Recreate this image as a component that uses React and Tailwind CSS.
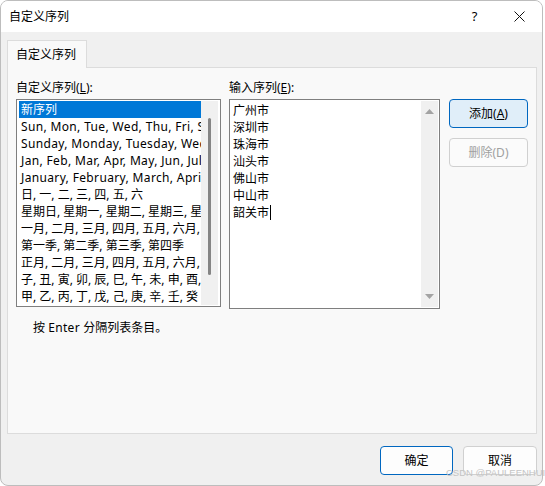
import React from "react";

const FONT = { fontFamily: '"Noto Sans", "Noto Sans CJK SC", sans-serif' };

const listItems = [
  { t: "Sun, Mon, Tue, Wed, Thu, Fri, Sat", latin: true },
  { t: "Sunday, Monday, Tuesday, Wednesday, Thursday, Friday, Saturday", latin: true },
  { t: "Jan, Feb, Mar, Apr, May, Jun, Jul, Aug, Sep, Oct, Nov, Dec", latin: true },
  { t: "January, February, March, April, May, June, July", latin: true },
  { t: "日, 一, 二, 三, 四, 五, 六" },
  { t: "星期日, 星期一, 星期二, 星期三, 星期四, 星期五, 星期六" },
  { t: "一月, 二月, 三月, 四月, 五月, 六月, 七月, 八月" },
  { t: "第一季, 第二季, 第三季, 第四季" },
  { t: "正月, 二月, 三月, 四月, 五月, 六月, 七月, 八月" },
  { t: "子, 丑, 寅, 卯, 辰, 巳, 午, 未, 申, 酉, 戌, 亥" },
  { t: "甲, 乙, 丙, 丁, 戊, 己, 庚, 辛, 壬, 癸" },
];

const cities = ["广州市", "深圳市", "珠海市", "汕头市", "佛山市", "中山市", "韶关市"];

function Button({ children, primary, disabled }) {
  return (
    <div
      className={`h-[29px] flex items-center justify-center rounded-[4px] border text-[12px] ${
        primary
          ? "border-[#0067c0] bg-[#e0eef9] text-black"
          : disabled
          ? "border-[#d0d0d0] bg-[#fbfbfb] text-[#a0a0a0]"
          : "border-[#d0d0d0] bg-[#fdfdfd] text-black"
      }`}
    >
      {children}
    </div>
  );
}

export default function App() {
  return (
    <div className="w-[545px] h-[486px] bg-white relative overflow-hidden text-black" style={FONT}>
      <div className="w-[543px] h-[486px] border border-[#bdbdbd] rounded-[8px] bg-[#f0f0f0] flex flex-col overflow-hidden">
        {/* title bar */}
        <div className="h-[31px] bg-white flex items-center shrink-0">
          <span className="pl-[8px] text-[12px]">自定义序列</span>
          <div className="ml-auto flex h-full">
            <div className="w-[46px] flex items-center justify-center text-[13px] pl-[3px]">?</div>
            <div className="w-[46px] flex items-center justify-center">
              <svg width="11" height="11" viewBox="0 0 11 11">
                <path d="M0.5 0.5 L10.5 10.5 M10.5 0.5 L0.5 10.5" stroke="#111" strokeWidth="1" />
              </svg>
            </div>
          </div>
        </div>

        <div className="pl-[6px] pt-[8px]">
          {/* tab */}
          <div className="w-[80px] h-[28px] border border-b-0 border-[#dcdcdc] bg-[#f9f9f9] flex items-center pl-[8px] text-[12px] relative z-10 -mb-px">
            自定义序列
          </div>

          {/* panel */}
          <div className="w-[530px] h-[367px] border border-[#dcdcdc] bg-[#f9f9f9] pl-[8px] pt-[12px] text-[12px]">
            <div className="flex">
              <div className="w-[205px]">
                <div className="h-[16px] leading-[16px] mb-[3px]">
                  自定义序列(<span className="underline">L</span>):
                </div>
                <div className="h-[208px] border border-[#7f7f7f] bg-white flex overflow-hidden">
                  <div className="w-[184px] pl-[2px] pt-[1px] overflow-hidden">
                    <div className="h-[17px] leading-[17px] bg-[#0078d7] text-white pl-[2px]">新序列</div>
                    {listItems.map((it) => (
                      <div
                        key={it.t}
                        className={`h-[17px] leading-[17px] pl-[2px] whitespace-nowrap ${
                          it.latin ? "tracking-[0.35px]" : ""
                        }`}
                      >
                        {it.t}
                      </div>
                    ))}
                  </div>
                  <div className="w-[17px] my-[1px] bg-[#f0f0f0] flex justify-center pt-[17px]">
                    <div className="w-[3px] h-[157px] bg-[#858585] rounded-full" />
                  </div>
                </div>
              </div>

              <div className="w-[211px] ml-[8px]">
                <div className="h-[16px] leading-[16px] mb-[3px]">
                  输入序列(<span className="underline">E</span>):
                </div>
                <div className="h-[210px] border border-[#7f7f7f] bg-white flex">
                  <div className="flex-1 pl-[3px] pt-[2px]">
                    {cities.map((c, i) => (
                      <div key={c} className="h-[17px] leading-[17px] flex items-center">
                        {c}
                        {i === cities.length - 1 && <span className="w-px h-[15px] bg-black ml-px" />}
                      </div>
                    ))}
                  </div>
                  <div className="w-[17px] my-[1px] mr-[1px] bg-[#f0f0f0] flex flex-col items-center justify-between py-[8px]">
                    <svg width="9" height="5" viewBox="0 0 9 5">
                      <path d="M0 5 L4.5 0 L9 5 Z" fill="#a3a3a3" />
                    </svg>
                    <svg width="9" height="5" viewBox="0 0 9 5">
                      <path d="M0 0 L9 0 L4.5 5 Z" fill="#a3a3a3" />
                    </svg>
                  </div>
                </div>
              </div>

              <div className="w-[79px] ml-[9px] pt-[19px] flex flex-col gap-[10px]">
                <Button primary>
                  添加(<span className="underline">A</span>)
                </Button>
                <Button disabled>删除(D)</Button>
              </div>
            </div>

            <div className="mt-[11px] pl-[17px] h-[16px] leading-[16px]">
              按 <span className="tracking-[0.35px]">Enter</span> 分隔列表条目。
            </div>
          </div>

          {/* footer */}
          <div className="w-[530px] flex justify-end gap-[10px] mt-[12px]">
            <div className="w-[73px] h-[29px] flex items-center justify-center rounded-[4px] border border-[#0067c0] bg-[#fdfdfd] text-[12px]">
              确定
            </div>
            <div className="w-[74px] h-[29px] flex items-center justify-center rounded-[4px] border border-[#d0d0d0] bg-[#fdfdfd] text-[12px]">
              取消
            </div>
          </div>
        </div>
      </div>

      <div
        className="absolute left-[446px] top-[467px] text-[9.5px] leading-[11px] text-[#c4c4c4] whitespace-nowrap"
        style={{ fontFamily: '"Liberation Sans", sans-serif' }}
      >
        CSDN @PAULEENHUI
      </div>
    </div>
  );
}
